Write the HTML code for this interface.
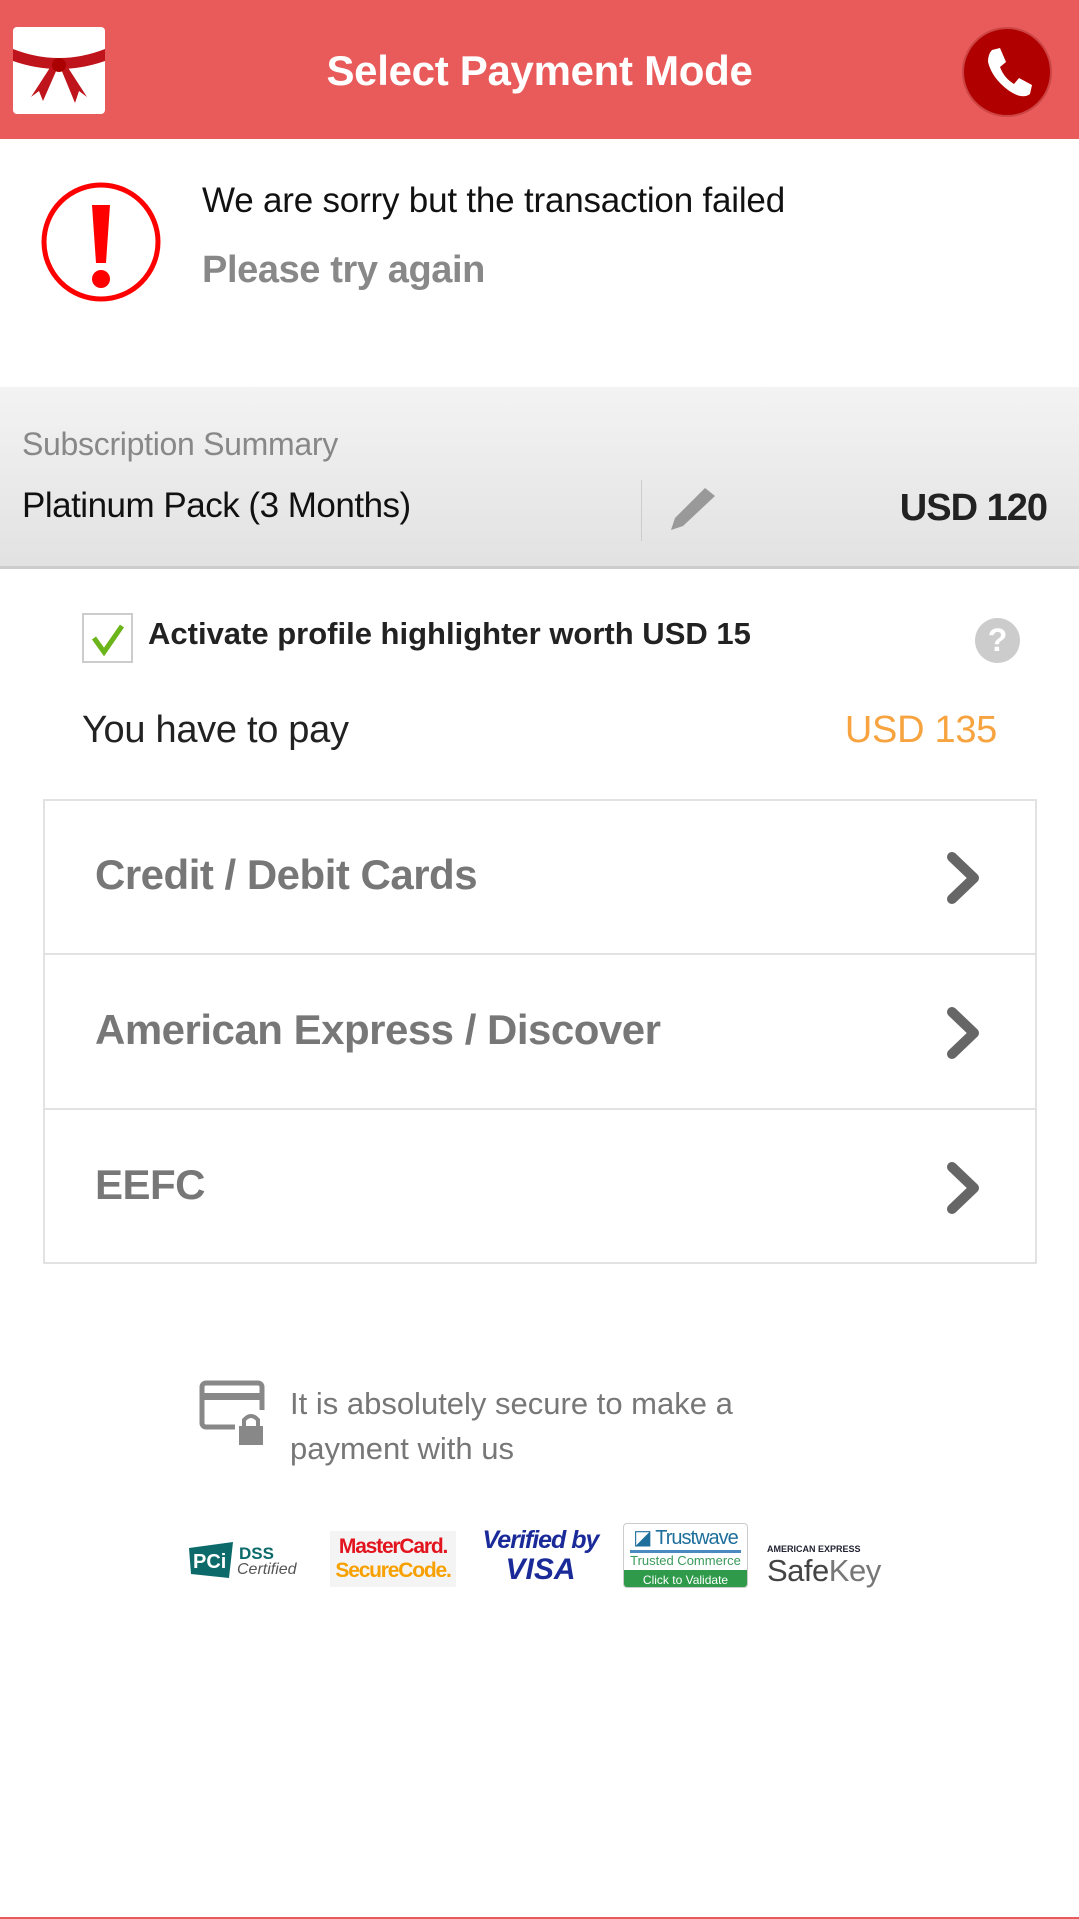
<!DOCTYPE html>
<html><head><meta charset="utf-8">
<style>
*{margin:0;padding:0;box-sizing:border-box}
body{width:1079px;height:1919px;background:#fff;position:relative;overflow:hidden;font-family:"Liberation Sans",sans-serif}
.a{position:absolute;white-space:nowrap}
</style></head><body>
<div class="a" style="left:0;top:0;width:1079px;height:139px;background:#e95a5a"></div>
<div class="a" style="left:13px;top:27px;width:92px;height:87px;background:#fff;border-radius:4px;overflow:hidden">
<svg width="92" height="87" viewBox="0 0 92 87"><path d="M0 22 Q46 40 92 22 L92 34 Q46 50 0 34Z" fill="#c0141c"/><path d="M40 36 L18 70 L26 64 L30 74 L44 42Z" fill="#c0141c"/><path d="M52 36 L74 70 L66 64 L62 76 L48 42Z" fill="#c0141c"/><circle cx="46" cy="38" r="7" fill="#a00"/></svg></div>
<div class="a" style="left:0;width:1079px;top:47px;text-align:center;color:#fff;font-weight:bold;font-size:42px;letter-spacing:-0.3px">Select Payment Mode</div>
<div class="a" style="left:962px;top:27px;width:90px;height:90px;border-radius:50%;background:#b00000;border:2px solid #c44"></div>
<svg class="a" style="left:978px;top:42px" width="60" height="60" viewBox="0 0 60 60"><path d="M14 8 L22 6 L28 20 L22 25 Q26 36 36 42 L41 36 L54 43 L52 52 Q44 58 30 48 Q14 36 10 20 Q10 12 14 8Z" fill="#fff"/></svg>
<svg class="a" style="left:40px;top:181px" width="122" height="122" viewBox="0 0 122 122"><circle cx="61" cy="61" r="57" fill="none" stroke="#f00" stroke-width="5"/><path d="M52 24 L70 24 L66 82 L56 82Z" fill="#f00"/><circle cx="61" cy="98" r="9" fill="#f00"/></svg>
<div class="a" style="left:202px;top:181px;font-size:35px;color:#111;letter-spacing:-0.2px">We are sorry but the transaction failed</div>
<div class="a" style="left:202px;top:249px;font-size:38px;font-weight:bold;color:#888;letter-spacing:-0.4px">Please try again</div>
<div class="a" style="left:0;top:387px;width:1079px;height:182px;background:linear-gradient(#f3f3f3,#e2e2e2);border-bottom:3px solid #ccc"></div>
<div class="a" style="left:22px;top:426px;font-size:32px;color:#888;letter-spacing:-0.3px">Subscription Summary</div>
<div class="a" style="left:22px;top:486px;font-size:35px;color:#111;letter-spacing:-0.5px">Platinum Pack (3 Months)</div>
<div class="a" style="left:641px;top:480px;width:1px;height:61px;background:#ccc"></div>
<svg class="a" style="left:669px;top:486px" width="52" height="46" viewBox="0 0 52 46"><path d="M36 2 L46 10 L14 40 L2 44 L6 32Z" fill="#999"/></svg>
<div class="a" style="right:32px;top:487px;font-size:38px;font-weight:bold;color:#222;letter-spacing:-1px">USD 120</div>
<div class="a" style="left:82px;top:613px;width:51px;height:50px;border:2px solid #ccc;background:#fff"></div>
<svg class="a" style="left:90px;top:622px" width="36" height="34" viewBox="0 0 36 34"><path d="M4 16 L14 30 L32 4" fill="none" stroke="#6bb51a" stroke-width="5"/></svg>
<div class="a" style="left:148px;top:616px;font-size:31px;font-weight:bold;color:#222">Activate profile highlighter worth USD 15</div>
<div class="a" style="left:975px;top:618px;width:45px;height:45px;border-radius:50%;background:#ccc;color:#fff;font-weight:bold;font-size:32px;text-align:center;line-height:45px">?</div>
<div class="a" style="left:82px;top:709px;font-size:38px;color:#222;letter-spacing:-0.3px">You have to pay</div>
<div class="a" style="right:82px;top:709px;font-size:38px;color:#f7a440;letter-spacing:-0.3px">USD 135</div>
<div class="a" style="left:43px;top:799px;width:994px;height:465px;border:2px solid #e2e2e2"></div>
<div class="a" style="left:43px;top:953px;width:994px;height:2px;background:#e2e2e2"></div>
<div class="a" style="left:43px;top:1108px;width:994px;height:2px;background:#e2e2e2"></div>
<div class="a" style="left:95px;top:851px;font-size:42px;font-weight:bold;color:#777;letter-spacing:-0.5px">Credit / Debit Cards</div>
<div class="a" style="left:95px;top:1006px;font-size:42px;font-weight:bold;color:#777;letter-spacing:-0.5px">American Express / Discover</div>
<div class="a" style="left:95px;top:1161px;font-size:42px;font-weight:bold;color:#777;letter-spacing:-0.5px">EEFC</div>
<svg class="a" style="left:942px;top:851px" width="44" height="54" viewBox="0 0 44 54"><path d="M10 6 L32 27 L10 48" fill="none" stroke="#666" stroke-width="10" stroke-linecap="round" stroke-linejoin="round"/></svg>
<svg class="a" style="left:942px;top:1006px" width="44" height="54" viewBox="0 0 44 54"><path d="M10 6 L32 27 L10 48" fill="none" stroke="#666" stroke-width="10" stroke-linecap="round" stroke-linejoin="round"/></svg>
<svg class="a" style="left:942px;top:1161px" width="44" height="54" viewBox="0 0 44 54"><path d="M10 6 L32 27 L10 48" fill="none" stroke="#666" stroke-width="10" stroke-linecap="round" stroke-linejoin="round"/></svg>
<svg class="a" style="left:199px;top:1380px" width="66" height="66" viewBox="0 0 66 66"><rect x="3" y="3" width="60" height="44" rx="4" fill="none" stroke="#888" stroke-width="5"/><rect x="3" y="13" width="60" height="7" fill="#888"/><rect x="36" y="30" width="30" height="36" fill="#fff"/><rect x="40" y="46" width="24" height="19" fill="#888"/><path d="M45 46 V40 Q52 32 59 40 V46" fill="none" stroke="#888" stroke-width="4"/></svg>
<div class="a" style="left:290px;top:1381px;font-size:31px;color:#777;line-height:45px;white-space:normal;width:520px">It is absolutely secure to make a payment with us</div>
<div class="a" style="left:187px;top:1540px;width:123px;height:45px">
<svg width="50" height="40" viewBox="0 0 50 40"><path d="M2 8 L46 2 L42 38 L4 34Z" fill="#0c6a6a"/><text x="6" y="28" font-family="Liberation Sans" font-weight="bold" font-size="20" fill="#fff">PCi</text></svg>
<div class="a" style="left:52px;top:4px;font-size:17px;font-weight:bold;color:#0c6a6a">DSS</div>
<div class="a" style="left:50px;top:21px;font-size:16px;font-style:italic;color:#555">Certified</div></div>
<div class="a" style="left:330px;top:1531px;width:126px;height:56px;background:#f4f4f4;text-align:center;font-weight:bold;font-size:21px;line-height:24px;padding-top:4px;letter-spacing:-1.2px"><span style="color:#e2141d">MasterCard.</span><br><span style="color:#f7a000">SecureCode.</span></div>
<div class="a" style="left:480px;top:1527px;width:121px;text-align:center;font-style:italic;font-weight:bold;line-height:26px"><span style="color:#1a2a99;font-size:25px;letter-spacing:-1px">Verified by</span><br><span style="color:#1a2a99;font-size:30px">VISA</span></div>
<div class="a" style="left:623px;top:1523px;width:125px;height:65px;border:1px solid #ccc;border-radius:4px;background:#fff;overflow:hidden">
<div style="color:#1f6f9c;font-size:20px;text-align:center;letter-spacing:-1px;margin-top:1px">◪ Trustwave</div>
<div style="height:3px;background:#4a8ac0;margin:0 6px"></div>
<div style="color:#3a9a5a;font-size:13px;text-align:center">Trusted Commerce</div>
<div style="background:#2e9a4a;color:#fff;font-size:12px;text-align:center;height:20px;line-height:20px;margin-top:2px">Click to Validate</div></div>
<div class="a" style="left:767px;top:1544px;font-size:9px;font-weight:bold;color:#223">AMERICAN EXPRESS</div>
<div class="a" style="left:767px;top:1553px;font-size:31px;color:#444;letter-spacing:-0.5px">Safe<span style="color:#777">Key</span></div>
<div class="a" style="left:0;top:1917px;width:1079px;height:2px;background:#e95a5a"></div>
</body></html>
